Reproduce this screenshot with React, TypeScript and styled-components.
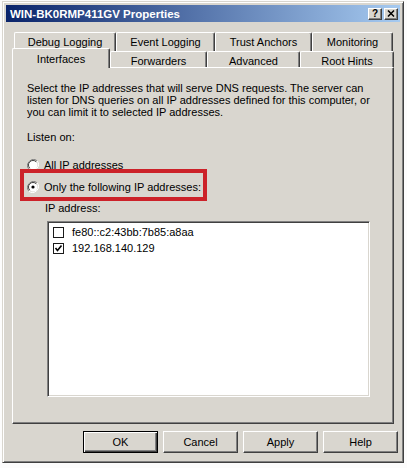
import React from 'react'
import styled, { createGlobalStyle } from 'styled-components'

const GlobalStyle = createGlobalStyle`
  body {
    margin: 0;
    background: #fcfcfc;
    font-family: "Liberation Sans", Arial, sans-serif;
    font-size: 11px;
    color: #000;
  }
`;

const face = '#d9d6cf';

const Window = styled.div`
  box-sizing: border-box;
  width: 402px;
  height: 462px;
  margin: 1px 0 0 2px;
  padding: 3px;
  background: ${face};
  border: 1px solid;
  border-color: ${face} #404040 #404040 ${face};
  box-shadow: inset 1px 1px #fff, inset -1px -1px #808080;
  display: flex;
  flex-direction: column;
`;

const TitleBar = styled.div`
  height: 17px;
  display: flex;
  align-items: center;
  padding: 0 2px;
  background: linear-gradient(to right, #0a246a, #a6caf0);
`;

const TitleText = styled.div`
  flex: 1;
  padding-left: 2px;
  color: #fff;
  font-weight: bold;
  font-size: 11.5px;
  white-space: nowrap;
`;

const TitleButton = styled.div`
  box-sizing: border-box;
  width: 14px;
  height: 12px;
  margin-left: 2px;
  background: ${face};
  border: 1px solid;
  border-color: #fff #404040 #404040 #fff;
  box-shadow: inset -1px -1px #808080;
  display: flex;
  align-items: center;
  justify-content: center;
  font-weight: bold;
  font-size: 10px;
  line-height: 10px;
`;

const TabArea = styled.div`
  margin-top: 10px;
  display: flex;
  flex-direction: column;
`;

const TabRow = styled.div<{ $indent: number }>`
  display: flex;
  align-items: flex-start;
  margin-left: ${p => p.$indent}px;
`;

const Tab = styled.div<{ $w: number; $active?: boolean; $h: number }>`
  box-sizing: border-box;
  width: ${p => p.$w}px;
  height: ${p => p.$active ? p.$h + 4 : p.$h}px;
  margin-top: ${p => p.$active ? -3 : 0}px;
  padding-top: ${p => p.$active ? 4 : 3}px;
  position: ${p => p.$active ? 'relative' : 'static'};
  z-index: ${p => p.$active ? 1 : 0};
  background: ${face};
  border-top: 1px solid #fff;
  border-left: 1px solid #fff;
  border-right: 1px solid #404040;
  border-radius: 2px 2px 0 0;
  box-shadow: inset -1px 0 #808080;
  text-align: center;
  white-space: nowrap;
`;

const Panel = styled.div`
  box-sizing: border-box;
  width: 382px;
  height: 357px;
  margin: -1px 0 0 6px;
  padding: 14px 12px 0 14px;
  border: 1px solid;
  border-color: #fff #404040 #404040 #fff;
  box-shadow: inset -1px -1px #808080;
  display: flex;
  flex-direction: column;
  align-items: flex-start;
`;

const Line = styled.div<{ $top?: number; $left?: number }>`
  line-height: 12px;
  white-space: nowrap;
  margin-top: ${p => p.$top ?? 0}px;
  margin-left: ${p => p.$left ?? 0}px;
`;

const RadioRow = styled.div<{ $top: number; $marked?: boolean }>`
  position: relative;
  height: 14px;
  margin-top: ${p => p.$top}px;
  display: flex;
  align-items: center;
  gap: 5px;
  white-space: nowrap;

  &::before {
    content: '';
    display: ${p => p.$marked ? 'block' : 'none'};
    position: absolute;
    left: -7px;
    top: -11px;
    width: 187px;
    height: 32px;
    box-sizing: border-box;
    border: 4px solid #cc2229;
  }
`;

const ListBox = styled.div`
  box-sizing: border-box;
  width: 323px;
  height: 176px;
  margin: 7px 0 0 20px;
  padding: 2px 0 0 5px;
  background: #fff;
  border: 1px solid;
  border-color: #808080 #fff #fff #808080;
  box-shadow: inset 1px 1px #404040, inset -1px -1px ${face};
`;

const ListRow = styled.div`
  height: 16px;
  display: flex;
  align-items: center;
  gap: 8px;
  white-space: nowrap;
`;

const Check = styled.div`
  box-sizing: border-box;
  width: 11px;
  height: 11px;
  border: 1px solid #1a1a1a;
  background: #fff;
  display: flex;
  align-items: center;
  justify-content: center;
`;

const ButtonRow = styled.div`
  display: flex;
  justify-content: flex-end;
  gap: 5px;
  margin-top: 7px;
  padding-right: 2px;
`;

const Button = styled.div<{ $default?: boolean }>`
  box-sizing: border-box;
  width: 75px;
  height: 22px;
  display: flex;
  align-items: center;
  justify-content: center;
  background: ${face};
  border: 1px solid;
  border-color: ${p => p.$default ? '#000' : '#fff #404040 #404040 #fff'};
  box-shadow: ${p => p.$default
    ? 'inset 1px 1px #fff, inset -1px -1px #404040, inset -2px -2px #808080'
    : 'inset -1px -1px #808080'};
`;

const Radio = ({ checked }: { checked?: boolean }) => (
  <svg width="12" height="12" viewBox="0 0 12 12">
    <path d="M10.2 1.8 A6 6 0 0 0 1.8 10.2" fill="none" stroke="#808080" strokeWidth="1" />
    <path d="M1.8 10.2 A6 6 0 0 0 10.2 1.8" fill="none" stroke="#fff" strokeWidth="1" />
    <circle cx="6" cy="6" r="4.5" fill="#fff" />
    <path d="M9.2 2.8 A4.5 4.5 0 0 0 2.8 9.2" fill="none" stroke="#404040" strokeWidth="1" />
    {checked && <circle cx="6" cy="6" r="1.6" fill="#000" />}
  </svg>
);

const CheckMark = () => (
  <svg width="9" height="9" viewBox="0 0 9 9">
    <path d="M1.5 4 L3.5 6.5 L7.5 1.5" fill="none" stroke="#000" strokeWidth="1.6" />
  </svg>
);

const CloseGlyph = () => (
  <svg width="8" height="7" viewBox="0 0 8 7">
    <path d="M1 0.5 L7 6.5 M7 0.5 L1 6.5" stroke="#000" strokeWidth="1.5" />
  </svg>
);

const backTabs = [
  { label: 'Debug Logging', w: 102 },
  { label: 'Event Logging', w: 99 },
  { label: 'Trust Anchors', w: 97 },
  { label: 'Monitoring', w: 81 },
];

const frontTabs = [
  { label: 'Interfaces', w: 98, active: true },
  { label: 'Forwarders', w: 97 },
  { label: 'Advanced', w: 93 },
  { label: 'Root Hints', w: 94 },
];

export default function App() {
  return (
    <>
      <GlobalStyle />
      <Window>
        <TitleBar>
          <TitleText>WIN-BK0RMP411GV Properties</TitleText>
          <TitleButton>?</TitleButton>
          <TitleButton><CloseGlyph /></TitleButton>
        </TitleBar>

        <TabArea>
          <TabRow $indent={8}>
            {backTabs.map(t => <Tab key={t.label} $w={t.w} $h={19}>{t.label}</Tab>)}
          </TabRow>
          <TabRow $indent={6}>
            {frontTabs.map(t => (
              <Tab key={t.label} $w={t.w} $h={16} $active={t.active}>{t.label}</Tab>
            ))}
          </TabRow>
          <Panel>
            <Line>Select the IP addresses that will serve DNS requests. The server can</Line>
            <Line>listen for DNS queries on all IP addresses defined for this computer, or</Line>
            <Line>you can limit it to selected IP addresses.</Line>
            <Line $top={13}>Listen on:</Line>
            <RadioRow $top={15}><Radio />All IP addresses</RadioRow>
            <RadioRow $top={8} $marked><Radio checked />Only the following IP addresses:</RadioRow>
            <Line $top={8} $left={18}>IP address:</Line>
            <ListBox>
              <ListRow><Check />fe80::c2:43bb:7b85:a8aa</ListRow>
              <ListRow><Check><CheckMark /></Check>192.168.140.129</ListRow>
            </ListBox>
          </Panel>
        </TabArea>

        <ButtonRow>
          <Button $default>OK</Button>
          <Button>Cancel</Button>
          <Button>Apply</Button>
          <Button>Help</Button>
        </ButtonRow>
      </Window>
    </>
  );
}
